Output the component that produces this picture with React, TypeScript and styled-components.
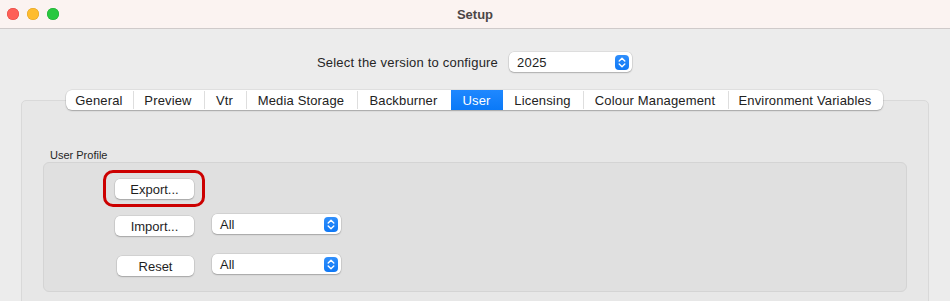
import React from "react";
import styled, { createGlobalStyle } from "styled-components";

const GlobalStyle = createGlobalStyle`
  html, body {
    margin: 0;
    padding: 0;
    background: #ececec;
    font-family: "Liberation Sans", Arial, sans-serif;
    color: #262626;
    overflow: hidden;
  }
`;

const Window = styled.div`
  width: 950px;
  height: 301px;
  background: #ececec;
  display: flex;
  flex-direction: column;
  overflow: hidden;
  & > * {
    flex-shrink: 0;
  }
`;

const TitleBar = styled.div`
  height: 28px;
  background: #fbf3f1;
  border-bottom: 1px solid #cfcaca;
  display: flex;
  align-items: center;
  padding-left: 7px;
  position: relative;
`;

const Lights = styled.div`
  display: flex;
  gap: 8px;
`;

const Light = styled.span<{ $c: string; $b: string }>`
  width: 12px;
  height: 12px;
  border-radius: 50%;
  background: ${(p) => p.$c};
  box-shadow: inset 0 0 0 0.5px ${(p) => p.$b};
`;

const Title = styled.div`
  position: absolute;
  left: 0;
  right: 0;
  text-align: center;
  font-size: 13px;
  font-weight: bold;
  color: #4b4646;
  pointer-events: none;
`;

const Content = styled.div`
  display: flex;
  flex-direction: column;
  padding: 23px 21px 0 21px;
`;

const VersionRow = styled.div`
  display: flex;
  align-items: center;
  justify-content: center;
  gap: 11px;
  padding-right: 1px;
  font-size: 13px;
  letter-spacing: 0.2px;
`;

const SelectBox = styled.div<{ $w: number }>`
  width: ${(p) => p.$w}px;
  height: 20px;
  box-sizing: border-box;
  background: #fff;
  border-radius: 5px;
  box-shadow: 0 0 0 0.5px rgba(0, 0, 0, 0.12), 0 1px 1.5px rgba(0, 0, 0, 0.22);
  display: flex;
  align-items: center;
  justify-content: space-between;
  padding: 0 3px 0 8px;
  font-size: 13px;
  color: #1e1e1e;
`;

const Stepper = styled.span`
  width: 14px;
  height: 15px;
  border-radius: 4px;
  background: linear-gradient(#2f8ffc, #0f78f5);
  display: flex;
  align-items: center;
  justify-content: center;
`;

const TabsArea = styled.div`
  margin-top: 18px;
  display: flex;
  flex-direction: column;
  align-items: center;
`;

const TabBar = styled.div`
  display: flex;
  flex-shrink: 0;
  height: 20px;
  background: #fff;
  border-radius: 6px;
  box-shadow: 0 0 0 0.5px rgba(0, 0, 0, 0.1), 0 1px 1.5px rgba(0, 0, 0, 0.25);
  position: relative;
  z-index: 1;
  margin-left: -2px;
  overflow: hidden;
`;

const Tab = styled.div<{ $w: number; $active?: boolean; $divider?: boolean }>`
  width: ${(p) => p.$w}px;
  display: flex;
  align-items: center;
  justify-content: center;
  font-size: 13px;
  letter-spacing: 0.15px;
  color: ${(p) => (p.$active ? "#fff" : "#222")};
  background: ${(p) => (p.$active ? "linear-gradient(#1f88ff, #0a79f7)" : "transparent")};
  position: relative;
  &::before {
    content: "";
    display: ${(p) => (p.$divider ? "block" : "none")};
    position: absolute;
    left: 0;
    top: 1px;
    bottom: 1px;
    width: 1px;
    background: #dedede;
  }
`;

const Panel = styled.div`
  align-self: stretch;
  flex-shrink: 0;
  margin-top: -10px;
  height: 240px;
  background: #e7e7e7;
  border: 1px solid #d9d9d9;
  border-radius: 5px;
  padding: 0 21px 0 21px;
  display: flex;
  flex-direction: column;
`;

const GroupLabel = styled.div`
  margin-top: 48px;
  margin-left: 7px;
  font-size: 11px;
  color: #262626;
  line-height: 13px;
`;

const Group = styled.div`
  box-sizing: border-box;
  height: 130px;
  flex-shrink: 0;
  background: #e0e0e0;
  border: 1px solid #d4d4d4;
  border-radius: 6px;
  padding: 16px 0 0 71px;
  display: flex;
  flex-direction: column;
`;

const Row = styled.div<{ $top: number }>`
  display: flex;
  align-items: flex-start;
  gap: 18px;
  margin-top: ${(p) => p.$top}px;
`;

const ButtonSlot = styled.div<{ $pad?: number }>`
  width: 79px;
  display: flex;
  justify-content: flex-end;
  margin-top: ${(p) => p.$pad ?? 0}px;
  position: relative;
`;

const Button = styled.div<{ $w: number }>`
  width: ${(p) => p.$w}px;
  height: 20px;
  background: #fff;
  border-radius: 5px;
  box-shadow: 0 0 0 0.5px rgba(0, 0, 0, 0.12), 0 1px 1.5px rgba(0, 0, 0, 0.22);
  display: flex;
  align-items: center;
  justify-content: center;
  font-size: 13px;
  color: #1e1e1e;
`;

const Highlight = styled.div`
  position: absolute;
  left: -12px;
  right: -11px;
  top: -9px;
  bottom: -8px;
  border: 3px solid #cc0000;
  border-radius: 10px;
  pointer-events: none;
`;

const StepIcon = () => (
  <svg width="8" height="11" viewBox="0 0 8 11">
    <path
      d="M1.2 4 L4 1.3 L6.8 4 M1.2 7 L4 9.7 L6.8 7"
      fill="none"
      stroke="#fff"
      strokeWidth="1.4"
      strokeLinecap="round"
      strokeLinejoin="round"
    />
  </svg>
);

const Select = ({ value, width }: { value: string; width: number }) => (
  <SelectBox $w={width}>
    <span>{value}</span>
    <Stepper>
      <StepIcon />
    </Stepper>
  </SelectBox>
);

const tabs = [
  { label: "General", w: 67 },
  { label: "Preview", w: 71 },
  { label: "Vtr", w: 42 },
  { label: "Media Storage", w: 111 },
  { label: "Backburner", w: 94 },
  { label: "User", w: 52 },
  { label: "Licensing", w: 80 },
  { label: "Colour Management", w: 145 },
  { label: "Environment Variables", w: 155 },
];

const activeTab = "User";

export default function App() {
  return (
    <>
      <GlobalStyle />
      <Window>
        <TitleBar>
          <Lights>
            <Light $c="#fe5f57" $b="#e1463f" />
            <Light $c="#febc2e" $b="#dea123" />
            <Light $c="#28c840" $b="#1eaa32" />
          </Lights>
          <Title>Setup</Title>
        </TitleBar>
        <Content>
          <VersionRow>
            <span>Select the version to configure</span>
            <Select value="2025" width={123} />
          </VersionRow>
          <TabsArea>
            <TabBar>
              {tabs.map((t, i) => {
                const active = t.label === activeTab;
                const prevActive = i > 0 && tabs[i - 1].label === activeTab;
                return (
                  <Tab
                    key={t.label}
                    $w={t.w}
                    $active={active}
                    $divider={i > 0 && !active && !prevActive}
                  >
                    {t.label}
                  </Tab>
                );
              })}
            </TabBar>
            <Panel>
              <GroupLabel>User Profile</GroupLabel>
              <Group>
                <Row $top={0}>
                  <ButtonSlot>
                    <Button $w={79}>Export...</Button>
                    <Highlight />
                  </ButtonSlot>
                </Row>
                <Row $top={15}>
                  <ButtonSlot $pad={2}>
                    <Button $w={79}>Import...</Button>
                  </ButtonSlot>
                  <Select value="All" width={129} />
                </Row>
                <Row $top={18}>
                  <ButtonSlot $pad={2}>
                    <Button $w={77}>Reset</Button>
                  </ButtonSlot>
                  <Select value="All" width={129} />
                </Row>
              </Group>
            </Panel>
          </TabsArea>
        </Content>
      </Window>
    </>
  );
}
